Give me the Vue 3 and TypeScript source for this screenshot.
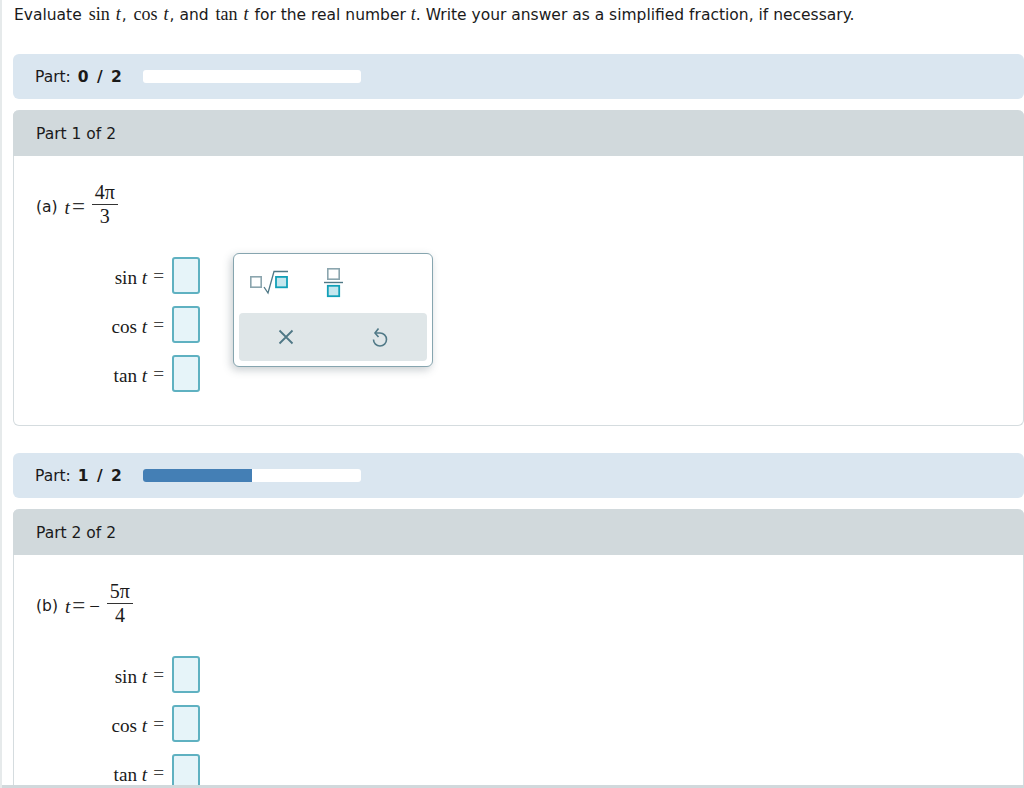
<script setup lang="ts">
interface Part {
  done: number
  title: string
  label: string
  minus: boolean
  num: string
  den: string
}

const parts: Part[] = [
  { done: 0, title: 'Part 1 of 2', label: '(a)', minus: false, num: '4π', den: '3' },
  { done: 1, title: 'Part 2 of 2', label: '(b)', minus: true, num: '5π', den: '4' },
]
const fns = ['sin', 'cos', 'tan']
</script>

<template>
  <div class="page">
    <p class="question">
      Evaluate <span class="m fn">sin</span><i class="m v">t</i>, <span class="m fn">cos</span><i class="m v">t</i>, and <span class="m fn">tan</span><i class="m v">t</i> for the real number <i class="m">t</i>. Write your answer as a simplified fraction, if necessary.
    </p>

    <section v-for="(p, i) in parts" :key="p.title" class="part" :class="{ second: i > 0 }">
      <div class="progress">
        <span class="progress-label">Part: <b>{{ p.done }} / 2</b></span>
        <div class="track"><div class="fill" :style="{ width: (p.done / 2) * 100 + '%' }"></div></div>
      </div>

      <div class="panel">
        <div class="panel-head">{{ p.title }}</div>
        <div class="panel-body">
          <div class="given">
            <span class="given-label">{{ p.label }}</span>
            <span class="m given-t"><i>t</i><span class="given-eq">=</span><span v-if="p.minus" class="minus">−</span></span>
            <span class="m frac">
              <span class="frac-num">{{ p.num }}</span>
              <span class="frac-den">{{ p.den }}</span>
            </span>
          </div>

          <div class="answers">
            <div v-for="f in fns" :key="f" class="answer">
              <span class="m answer-label">{{ f }} <i>t</i><span class="eq">=</span></span>
              <span class="box"></span>
            </div>
          </div>

          <div v-if="i === 0" class="palette">
            <div class="palette-top">
              <svg width="40" height="26" viewBox="0 0 40 26" fill="none">
                <rect x="0.8" y="6.8" width="10.4" height="10.4" fill="#fff" stroke="#8ba5ae" stroke-width="1.6" />
                <path d="M14 17l4 6 6-21.5h14" stroke="#4f7886" stroke-width="1.3" />
                <rect x="26" y="6.9" width="11" height="10.4" fill="#c5e7ee" stroke="#12a0b8" stroke-width="1.8" />
              </svg>
              <svg width="22" height="32" viewBox="0 0 22 32" fill="none">
                <rect x="4.8" y="1.8" width="11.4" height="10.4" fill="#fff" stroke="#8ba5ae" stroke-width="1.6" />
                <path d="M1 15.5h19" stroke="#4f7886" stroke-width="1.4" />
                <rect x="4.8" y="18.8" width="11.4" height="10.4" fill="#c5e7ee" stroke="#12a0b8" stroke-width="1.8" />
              </svg>
            </div>
            <div class="palette-actions">
              <svg width="16" height="16" viewBox="0 0 16 16" fill="none" stroke="#4f7886" stroke-width="1.8">
                <path d="M1.5 1.5l13 13M14.5 1.5l-13 13" />
              </svg>
              <svg width="16" height="20" viewBox="0 0 16 20" fill="none" stroke="#4f7886" stroke-width="1.6">
                <path d="M3.5 6H8a6.5 6.5 0 1 1-6.5 6.5" />
                <path d="M6.5 1.5L3 6l3.5 4" />
              </svg>
            </div>
          </div>
        </div>
      </div>
    </section>

    <div class="bottom-strip"></div>
  </div>
</template>

<style>
html, body { margin: 0; background: #fff; }
</style>

<style scoped>
.page { position: relative; box-sizing: border-box; width: 1024px; height: 788px; overflow: hidden; padding-left: 11px; background: #fff; border-left: 2px solid #e6eaeb; font-family: "DejaVu Sans", Verdana, sans-serif; font-size: 15.5px; color: #1a1a1a; }
.question { margin: 0; height: 54px; padding-left: 1px; line-height: 29px; white-space: nowrap; }
.m { font-family: "Liberation Serif", "Times New Roman", serif; }
.question .m { font-size: 18px; }
.fn { margin-left: 2px; margin-right: 6px; }
.v { margin-right: 1px; }
.part.second { margin-top: 27px; }
.progress { display: flex; align-items: center; box-sizing: border-box; height: 45px; padding: 1px 0 0 22px; border-radius: 6px; background: #dae6f0; }
.progress-label { width: 108px; white-space: nowrap; }
.progress-label b { margin-left: 2px; word-spacing: 3px; }
.track { width: 218px; height: 13px; margin-top: -2px; border-radius: 3px; background: #fff; overflow: hidden; }
.fill { height: 100%; background: #447fb5; }
.panel { position: relative; margin-top: 11px; height: 316px; box-sizing: border-box; border-radius: 6px; border: 1px solid #d5dcdf; border-top: 0; display: flex; flex-direction: column; }
.panel-head { height: 45.5px; margin: 0 -1px; padding-left: 23px; line-height: 48px; background: #d1d9dc; border-radius: 6px 6px 0 0; }
.panel-body { position: relative; flex: 1; }
.given { display: flex; align-items: center; height: 48px; margin-top: 24.5px; padding-left: 22px; }
.given-label { margin-right: 7px; padding-top: 5px; }
.given-t { padding-top: 5px; font-size: 19px; }
.given-eq { margin-left: 2px; font-size: 23px; line-height: 1; color: #333; }
.minus { margin-left: 4px; }
.frac { display: flex; flex-direction: column; align-items: center; margin-left: 7px; width: 26px; font-size: 20px; line-height: 23px; }
.frac-num { width: 100%; text-align: center; border-bottom: 1px solid #333; }
.answers { display: flex; flex-direction: column; gap: 12px; margin-top: 29px; padding-left: 80px; }
.answer { display: flex; align-items: center; justify-content: flex-end; gap: 8px; width: 106px; }
.answer-label { padding-top: 3px; font-size: 19.2px; white-space: nowrap; }
.eq { margin-left: 6px; color: #444; vertical-align: 2px; }
.box { box-sizing: border-box; flex: none; width: 28px; height: 37px; border: 2px solid #5fb1c1; border-radius: 3px; background: #e6f4f9; }
.palette { position: absolute; left: 219px; top: 97.5px; box-sizing: border-box; width: 200px; height: 114px; background: #fff; border: 1px solid #86a5af; border-radius: 6px; box-shadow: -2px 3px 8px rgba(60, 80, 90, .28); padding: 5px; }
.palette-top { display: flex; align-items: center; gap: 33px; box-sizing: border-box; height: 54px; padding: 0 0 6px 11px; }
.palette-actions { display: flex; align-items: center; justify-content: space-between; height: 48px; padding: 0 39px; border-radius: 4px; background: #dfe6e8; }
.bottom-strip { position: absolute; left: -2px; right: 0; bottom: 0; height: 3px; background: #d1d9dc; }
</style>
